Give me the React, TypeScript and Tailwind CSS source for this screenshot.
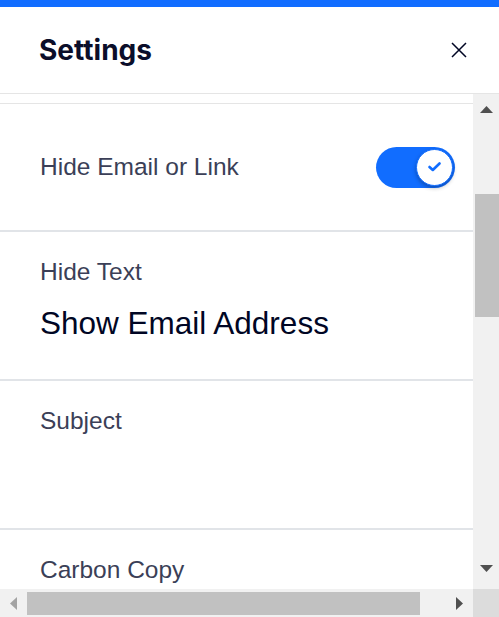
import React, { useState } from 'react';

const bodyFont = { fontFamily: '"Liberation Sans", Arial, sans-serif' };

const Toggle = ({ on, onChange }: { on: boolean; onChange: () => void }) => (
  <button
    onClick={onChange}
    className={`flex h-[41px] w-[79px] items-center rounded-full px-[2px] ${on ? 'justify-end bg-[#116dff]' : 'justify-start bg-[#bcbcbc]'}`}
  >
    <span className="flex h-[37px] w-[37px] items-center justify-center rounded-full border border-[#116dff] bg-white shadow-[0_2px_4px_rgba(0,0,0,0.3)]">
      {on && (
        <svg width="13" height="10" viewBox="0 0 13 10" fill="none">
          <path d="M1.5 5 L4.8 8 L11.5 1.5" stroke="#116dff" strokeWidth="2.6" strokeLinecap="round" strokeLinejoin="round" />
        </svg>
      )}
    </span>
  </button>
);

const Field = ({ label, value, last }: { label: string; value?: string; last?: boolean }) => (
  <div className={`px-10 pt-[22px] ${last ? '' : 'border-b-2 border-[#e1e4e8] pb-[36px]'}`}>
    <div className="text-[24.5px] leading-[36px] text-[#3b3f57]">{label}</div>
    <div className="mt-[13px] h-[40px] text-[31.5px] leading-[40px] text-[#000624]">{value}</div>
  </div>
);

const Arrow = ({ dir, color }: { dir: 'up' | 'down' | 'left' | 'right'; color: string }) => {
  const pts = {
    up: '0,7 6.5,0 13,7',
    down: '0,0 13,0 6.5,7',
    left: '7,0 7,13 0,6.5',
    right: '0,0 7,6.5 0,13',
  }[dir];
  const vertical = dir === 'up' || dir === 'down';
  return (
    <svg width={vertical ? 13 : 7} height={vertical ? 7 : 13} viewBox={vertical ? '0 0 13 7' : '0 0 7 13'}>
      <polygon points={pts} fill={color} />
    </svg>
  );
};

export default function App() {
  const [hideEmail, setHideEmail] = useState(true);

  return (
    <div className="flex h-[617px] w-[499px] flex-col overflow-hidden bg-white" style={bodyFont}>
      <div className="h-[7px] bg-[#116dff]" />

      {/* header */}
      <div className="flex h-[87px] items-center justify-between border-b border-[#e5e5e5] pl-[39px] pr-[32px]">
        <h1 className="text-[28px] font-bold leading-none text-[#0b0e2a]" style={{ fontFamily: 'Inter, "Liberation Sans", sans-serif' }}>
          Settings
        </h1>
        <button aria-label="Close" className="flex h-[16px] w-[16px] items-center justify-center">
          <svg width="16" height="16" viewBox="0 0 16 16">
            <path d="M1 1 L15 15 M15 1 L1 15" stroke="#000624" strokeWidth="1.5" />
          </svg>
        </button>
      </div>

      <div className="flex min-h-0 flex-1">
        {/* scrolled panel content */}
        <div className="w-[473px] overflow-hidden">
          <div className="h-[10px] border-b border-[#e5e5e5]" />
          <div className="flex h-[128px] items-center justify-between border-b-2 border-[#e1e4e8] pl-10 pr-[18px]">
            <span className="text-[24.5px] leading-[36px] text-[#3b3f57]">Hide Email or Link</span>
            <Toggle on={hideEmail} onChange={() => setHideEmail(!hideEmail)} />
          </div>
          <Field label="Hide Text" value="Show Email Address" />
          <Field label="Subject" />
          <Field label="Carbon Copy" last />
        </div>

        {/* vertical scrollbar */}
        <div className="flex w-[26px] flex-col bg-[#f1f1f1]">
          <div className="flex h-[26px] items-end justify-center pb-[7px] pl-[1px]">
            <Arrow dir="up" color="#505050" />
          </div>
          <div className="flex-1 pl-[2px] pt-[74px]">
            <div className="h-[123px] bg-[#c1c1c1]" />
          </div>
          <div className="flex h-[26px] items-start justify-center pt-[2px] pl-[1px]">
            <Arrow dir="down" color="#505050" />
          </div>
        </div>
      </div>

      {/* horizontal scrollbar */}
      <div className="flex h-[28px] bg-[#f1f1f1]">
        <div className="flex w-[27px] items-center justify-center pt-[1px]">
          <Arrow dir="left" color="#a3a3a3" />
        </div>
        <div className="flex-1 pb-[2px] pt-[3px]">
          <div className="h-full w-[393px] bg-[#c1c1c1]" />
        </div>
        <div className="flex w-[27px] items-center justify-center pt-[1px]">
          <Arrow dir="right" color="#505050" />
        </div>
        <div className="w-[26px] bg-[#dcdcdc]" />
      </div>
    </div>
  );
}
